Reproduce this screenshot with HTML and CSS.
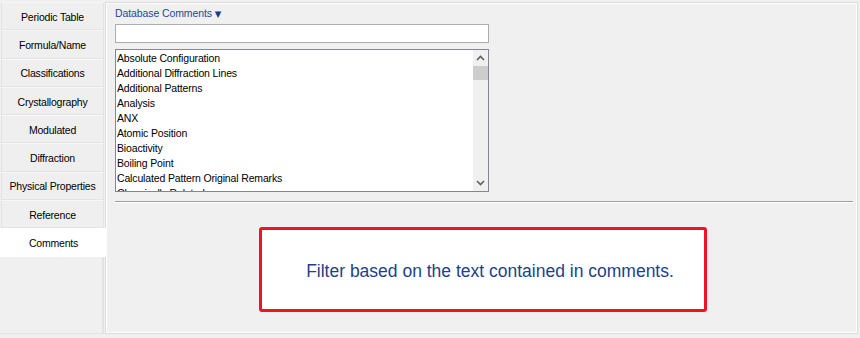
FILE: index.html
```html
<!DOCTYPE html>
<html>
<head>
<meta charset="utf-8">
<link rel="stylesheet" href="styles.css">
</head>
<body>
<div class="app">
  <nav class="tabs">
    <div class="tab">Periodic Table</div>
    <div class="tab">Formula/Name</div>
    <div class="tab">Classifications</div>
    <div class="tab">Crystallography</div>
    <div class="tab">Modulated</div>
    <div class="tab">Diffraction</div>
    <div class="tab">Physical Properties</div>
    <div class="tab">Reference</div>
    <div class="tab active">Comments</div>
    <div class="tab-fill"></div>
  </nav>
  <main class="panel">
    <div class="field-title">Database Comments <span class="caret">▼</span></div>
    <input class="search" type="text">
    <div class="listbox">
      <ul class="items">
        <li>Absolute Configuration</li>
        <li>Additional Diffraction Lines</li>
        <li>Additional Patterns</li>
        <li>Analysis</li>
        <li>ANX</li>
        <li>Atomic Position</li>
        <li>Bioactivity</li>
        <li>Boiling Point</li>
        <li>Calculated Pattern Original Remarks</li>
        <li>Chemically Related</li>
      </ul>
      <div class="scrollbar">
        <div class="arrow"><svg width="9" height="6" viewBox="0 0 9 6"><path d="M1 5 L4.5 1.5 L8 5" fill="none" stroke="#606060" stroke-width="1.6"/></svg></div>
        <div class="track"><div class="thumb"></div></div>
        <div class="arrow"><svg width="9" height="6" viewBox="0 0 9 6"><path d="M1 1 L4.5 4.5 L8 1" fill="none" stroke="#606060" stroke-width="1.6"/></svg></div>
      </div>
    </div>
    <div class="separator"></div>
    <div class="hint-wrap">
      <div class="hint">Filter based on the text contained in comments.</div>
    </div>
  </main>
</div>
</body>
</html>
```

FILE: styles.css
```css
html, body {
  margin: 0;
  padding: 0;
}
body {
  background: #f0f0f0;
  width: 860px;
  height: 338px;
  overflow: hidden;
  font-family: "Liberation Sans", Arial, sans-serif;
  font-size: 10.5px;
  color: #000;
}
.app {
  display: flex;
  height: 338px;
}
.tabs {
  width: 104px;
  display: flex;
  flex-direction: column;
  padding-top: 2px;
  box-sizing: border-box;
}
.tab {
  height: 28.3px;
  box-sizing: border-box;
  display: flex;
  align-items: center;
  justify-content: center;
  border: 1px solid #e3e3e3;
  border-top-color: #f7f7f7;
  margin-left: 1px;
  font-size: 10.5px;
  letter-spacing: -0.2px;
  color: #000;
  background: #efefef;
  padding-top: 1px;
}
.tab.active {
  background: #fff;
  border-color: #fff;
  margin-left: 0;
  margin-right: -3px;
  position: relative;
  z-index: 1;
}
.tab-fill {
  flex: 1;
  margin-bottom: 4px;
  border-right: 2px solid #e3e3e3;
  border-bottom: 1px solid #e3e3e3;
}
.panel {
  flex: 1;
  margin: 2px 2px 4px 1px;
  border: 1px solid #dcdcdc;
  box-shadow: inset 1px 1px 0 #fff, inset -1px -1px 0 #fff;
  padding: 2px 4px 0 9px;
  display: flex;
  flex-direction: column;
  background: #f0f0f0;
}
.field-title {
  color: #2446a8;
  font-size: 10.5px;
  height: 16px;
  line-height: 16px;
  letter-spacing: -0.1px;
}
.caret {
  font-size: 8.5px;
  font-family: "DejaVu Sans", sans-serif;
  color: #1e3a8a;
}
.search {
  width: 374px;
  height: 19px;
  box-sizing: border-box;
  margin: 3px 0 0 0;
  border: 1px solid #abadb3;
  background: #fff;
  padding: 0;
}
.listbox {
  margin-top: 6px;
  width: 374px;
  height: 143px;
  box-sizing: border-box;
  border: 1px solid #828790;
  background: #fff;
  display: flex;
  overflow: hidden;
}
.items {
  list-style: none;
  margin: 0;
  padding: 1px 0 0 1px;
  flex: 1;
  overflow: hidden;
}
.items li {
  height: 15px;
  line-height: 15px;
  white-space: nowrap;
  letter-spacing: -0.15px;
}
.scrollbar {
  width: 15px;
  background: #f0f0f0;
  display: flex;
  flex-direction: column;
}
.arrow {
  height: 16px;
  display: flex;
  align-items: center;
  justify-content: center;
}
.track {
  flex: 1;
}
.thumb {
  height: 14px;
  background: #cdcdcd;
}
.separator {
  margin-top: 9px;
  height: 1px;
  background: #a0a0a0;
  border-bottom: 1px solid #fff;
}
.hint-wrap {
  display: flex;
  justify-content: center;
  padding-top: 24px;
  padding-right: 2px;
}
.hint {
  width: 448px;
  height: 85px;
  box-sizing: border-box;
  border: 3px solid #ee1422;
  border-radius: 3px;
  background: #fff;
  display: flex;
  align-items: center;
  justify-content: center;
  color: #1d3f8c;
  font-size: 17.5px;
  padding-top: 3px;
  padding-left: 14px;
}
```
